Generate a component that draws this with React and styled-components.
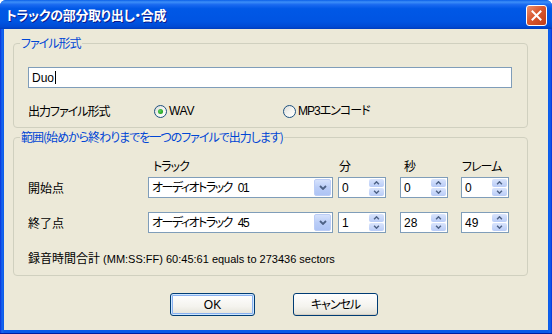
import React from 'react';
import styled, { createGlobalStyle } from 'styled-components';

const GlobalStyle = createGlobalStyle`
  html, body {
    margin: 0;
    padding: 0;
    background: #ffffff;
  }

  body {
    font-family: 'Liberation Sans', 'Noto Sans CJK JP', sans-serif;
    font-size: 12px;
    color: #000000;
    font-feature-settings: 'palt';
  }

  * {
    box-sizing: border-box;
  }
`;

// label | track | min | sec | frame
const COLUMNS = '120px 190px 62px 61px 48px';

function Chevron({ up = false, width = 8, height = 5 }) {
  return (
    <svg width={width} height={height} viewBox="0 0 8 5">
      <path
        d={up ? 'M1 4 L4 1 L7 4' : 'M1 1 L4 4 L7 1'}
        fill="none"
        stroke="#4D6185"
        strokeWidth="1.8"
      />
    </svg>
  );
}

function ComboBox({ value }) {
  return (
    <Combo>
      <FieldText $tight>{value}</FieldText>
      <ArrowButton>
        <Chevron />
      </ArrowButton>
    </Combo>
  );
}

function SpinBox({ value }) {
  return (
    <Spin>
      <FieldText>{value}</FieldText>
      <SpinButtons>
        <SpinHalf>
          <Chevron up width={7} height={4} />
        </SpinHalf>
        <SpinHalf>
          <Chevron width={7} height={4} />
        </SpinHalf>
      </SpinButtons>
    </Spin>
  );
}

function Radio({ label, checked, width, tight }) {
  return (
    <RadioOption $width={width} $tight={tight}>
      <RadioCircle>{checked && <RadioDot />}</RadioCircle>
      {label}
    </RadioOption>
  );
}

function App() {
  return (
    <>
      <GlobalStyle />
      <Window>
        <TitleBar>
          <Title>トラックの部分取り出し・合成</Title>
          <CloseButton>
            <svg width="11" height="11" viewBox="0 0 11 11">
              <path
                d="M1.5 1.5 L9.5 9.5 M9.5 1.5 L1.5 9.5"
                stroke="#ffffff"
                strokeWidth="2"
                strokeLinecap="square"
              />
            </svg>
          </CloseButton>
        </TitleBar>

        <Client>
          <GroupBox $height={85} $top={14}>
            <GroupLabel>ファイル形式</GroupLabel>
            <FileGroupBody>
              <TextBox>
                Duo
                <Caret />
              </TextBox>
              <RadioRow>
                <RowLabel $width={126} $tight>
                  出力ファイル形式
                </RowLabel>
                <Radio label="WAV" checked width={129} />
                <Radio label="MP3エンコード" tight />
              </RadioRow>
            </FileGroupBody>
          </GroupBox>

          <GroupBox $height={139} $top={9}>
            <GroupLabel>範囲(始めから終わりまでを一つのファイルで出力します)</GroupLabel>
            <RangeGroupBody>
              <HeaderRow>
                <span />
                <HeaderCell $offset={5}>トラック</HeaderCell>
                <HeaderCell $offset={1}>分</HeaderCell>
                <HeaderCell $offset={4}>秒</HeaderCell>
                <HeaderCell $offset={1}>フレーム</HeaderCell>
              </HeaderRow>

              <ControlRow $gap={4}>
                <RowLabel>開始点</RowLabel>
                <ComboBox value="オーディオトラック 01" />
                <SpinBox value="0" />
                <SpinBox value="0" />
                <SpinBox value="0" />
              </ControlRow>

              <ControlRow $gap={14}>
                <RowLabel>終了点</RowLabel>
                <ComboBox value="オーディオトラック 45" />
                <SpinBox value="1" />
                <SpinBox value="28" />
                <SpinBox value="49" />
              </ControlRow>

              <TotalLine>
                録音時間合計
                <LatinText> (MM:SS:FF) 60:45:61 equals to 273436 sectors</LatinText>
              </TotalLine>
            </RangeGroupBody>
          </GroupBox>

          <ButtonRow>
            <PushButton $default>OK</PushButton>
            <PushButton $tight>キャンセル</PushButton>
          </ButtonRow>
        </Client>
      </Window>
    </>
  );
}

const Window = styled.div`
  width: 552px;
  height: 334px;
  display: flex;
  flex-direction: column;
  background: linear-gradient(to right, #0831d9 0px, #1667f0 2px, #0a5ae8 4px, #0a5ae8 548px, #1062ee 550px, #0831d9 552px);
  border-radius: 6px 6px 0 0;
  box-shadow: inset 0 -1px 0 #001ea0;
  overflow: hidden;
`;

const TitleBar = styled.div`
  height: 29px;
  flex-shrink: 0;
  display: flex;
  align-items: center;
  justify-content: space-between;
  padding: 0 5px 0 6px;
  background: linear-gradient(
    to bottom,
    #0a5fe8 0%,
    #3d8ff8 7%,
    #1a6af0 16%,
    #0058e6 30%,
    #0054e2 75%,
    #004ad4 92%,
    #003dbd 100%
  );
`;

const Title = styled.span`
  color: #ffffff;
  font-family: 'Noto Sans CJK JP', sans-serif;
  font-weight: 700;
  font-size: 13px;
  line-height: 16px;
  letter-spacing: -0.3px;
  text-shadow: 1px 1px 0 #0a1a8c;
  padding-top: 1px;
`;

const CloseButton = styled.div`
  width: 21px;
  height: 21px;
  display: flex;
  align-items: center;
  justify-content: center;
  border: 1px solid #ffffff;
  border-radius: 3px;
  background: linear-gradient(to bottom right, #e9906f 0%, #d9582f 45%, #c23d17 100%);
  margin-top: 1px;
`;

const Client = styled.div`
  flex: 1;
  margin: 0 4px 4px;
  background: #ece9d8;
  display: flex;
  flex-direction: column;
  padding-left: 9px;
`;

const GroupBox = styled.div`
  position: relative;
  width: 515px;
  height: ${(props) => props.$height}px;
  margin-top: ${(props) => props.$top}px;
  border: 1px solid #d0d0bf;
  border-radius: 4px;
`;

const GroupLabel = styled.span`
  position: absolute;
  top: -8px;
  left: 6px;
  padding: 0 1px;
  background: #ece9d8;
  color: #0046d5;
  font-family: 'Noto Sans CJK JP', sans-serif;
  font-size: 12px;
  line-height: 14px;
  letter-spacing: -1px;
  white-space: nowrap;
`;

const FileGroupBody = styled.div`
  display: flex;
  flex-direction: column;
  padding: 23px 0 0 14px;
`;

const TextBox = styled.div`
  width: 484px;
  height: 21px;
  display: flex;
  align-items: center;
  padding-left: 3px;
  background: #ffffff;
  border: 1px solid #7f9db9;
  font-size: 12px;
`;

const Caret = styled.span`
  width: 1px;
  height: 13px;
  margin-left: 1px;
  background: #000000;
`;

const RadioRow = styled.div`
  display: flex;
  align-items: center;
  height: 16px;
  margin-top: 15px;
`;

const RowLabel = styled.span`
  width: ${(props) => (props.$width ? `${props.$width}px` : 'auto')};
  font-family: 'Noto Sans CJK JP', sans-serif;
  font-size: 12px;
  line-height: 14px;
  letter-spacing: ${(props) => (props.$tight ? '-1px' : '0')};
`;

const RadioOption = styled.span`
  width: ${(props) => (props.$width ? `${props.$width}px` : 'auto')};
  display: flex;
  align-items: center;
  gap: 2px;
  font-size: 12px;
  line-height: 14px;
  letter-spacing: ${(props) => (props.$tight ? '-1px' : '-0.3px')};
`;

const RadioCircle = styled.span`
  width: 13px;
  height: 13px;
  display: flex;
  align-items: center;
  justify-content: center;
  border: 1px solid #1c5180;
  border-radius: 50%;
  background: linear-gradient(to bottom right, #dcdcd7 0%, #f4f4f0 50%, #ffffff 100%);
`;

const RadioDot = styled.span`
  width: 5px;
  height: 5px;
  border-radius: 50%;
  background: radial-gradient(circle at 40% 40%, #5ed35e 0%, #21a121 70%);
`;

const RangeGroupBody = styled.div`
  display: flex;
  flex-direction: column;
  padding: 21px 0 0 14px;
`;

const HeaderRow = styled.div`
  display: grid;
  grid-template-columns: ${COLUMNS};
  height: 14px;
  align-items: center;
`;

const HeaderCell = styled.span`
  padding-left: ${(props) => props.$offset}px;
  font-family: 'Noto Sans CJK JP', sans-serif;
  font-size: 12px;
  line-height: 14px;
  letter-spacing: -1px;
  white-space: nowrap;
`;

const ControlRow = styled.div`
  display: grid;
  grid-template-columns: ${COLUMNS};
  align-items: center;
  height: 21px;
  margin-top: ${(props) => props.$gap}px;
`;

const Combo = styled.div`
  width: 185px;
  height: 21px;
  display: flex;
  align-items: center;
  justify-content: space-between;
  padding: 1px;
  background: #ffffff;
  border: 1px solid #7f9db9;
`;

const FieldText = styled.span`
  padding-left: 2px;
  font-family: 'Liberation Sans', 'Noto Sans CJK JP', sans-serif;
  font-size: 12px;
  line-height: 14px;
  letter-spacing: ${(props) => (props.$tight ? '-1.5px' : '0')};
  word-spacing: ${(props) => (props.$tight ? '4px' : '0')};
  white-space: pre;
`;

const ArrowButton = styled.span`
  width: 17px;
  height: 17px;
  display: flex;
  align-items: center;
  justify-content: center;
  border: 1px solid #bccdf6;
  border-radius: 2px;
  background: linear-gradient(to bottom, #d6e2fc 0%, #bacdf7 50%, #aec4f5 100%);
`;

const Spin = styled.div`
  width: 48px;
  height: 21px;
  display: flex;
  align-items: center;
  justify-content: space-between;
  padding: 1px;
  background: #ffffff;
  border: 1px solid #7f9db9;
`;

const SpinButtons = styled.span`
  width: 15px;
  height: 17px;
  display: flex;
  flex-direction: column;
  gap: 1px;
`;

const SpinHalf = styled.span`
  flex: 1;
  display: flex;
  align-items: center;
  justify-content: center;
  border-radius: 2px;
  background: linear-gradient(to bottom, #d9e4fc 0%, #b9ccf7 100%);
`;

const TotalLine = styled.div`
  margin-top: 18px;
  font-family: 'Noto Sans CJK JP', sans-serif;
  font-size: 12px;
  line-height: 14px;
  white-space: nowrap;
`;

const LatinText = styled.span`
  font-family: 'Liberation Sans', sans-serif;
  font-size: 11px;
`;

const ButtonRow = styled.div`
  display: flex;
  gap: 38px;
  margin-top: 17px;
  padding-left: 157px;
`;

const PushButton = styled.div`
  width: 85px;
  height: 23px;
  display: flex;
  align-items: center;
  justify-content: center;
  border: 1px solid #003c74;
  border-radius: 3px;
  background: linear-gradient(to bottom, #ffffff 0%, #f4f3ee 60%, #e3e1d6 100%);
  box-shadow: ${(props) =>
    props.$default
      ? 'inset 0 0 0 1px #cee7ff, inset 0 0 0 2px #88b0f0'
      : 'inset 0 -1px 0 #d6d0c5'};
  font-family: 'Liberation Sans', 'Noto Sans CJK JP', sans-serif;
  font-size: 12px;
  line-height: 14px;
  letter-spacing: ${(props) => (props.$tight ? '-1px' : '0')};
`;

export default App;
